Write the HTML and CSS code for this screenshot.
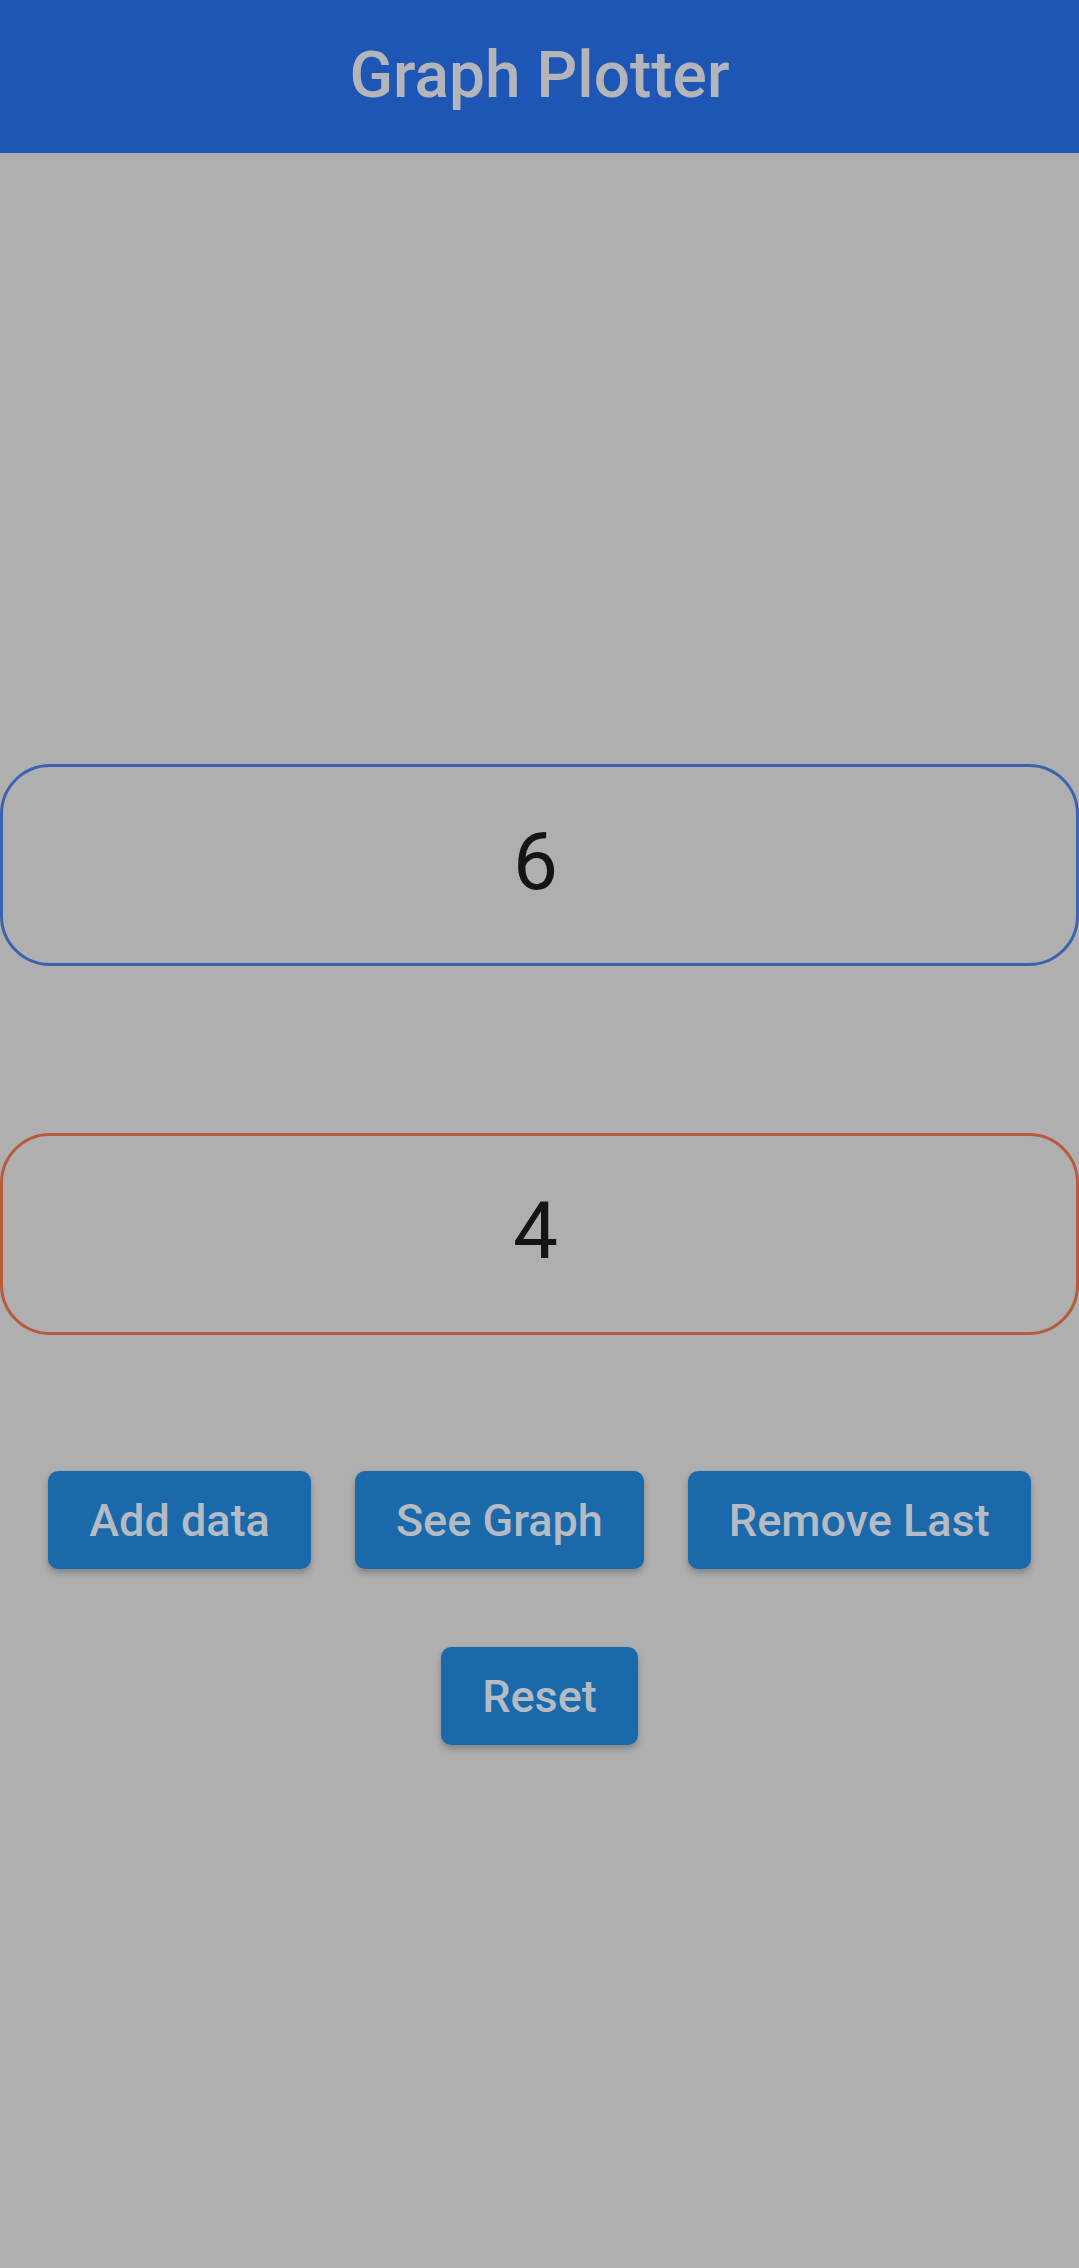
FILE: index.html
```html
<!DOCTYPE html>
<html>
<head>
<meta charset="utf-8">
<link rel="stylesheet" href="styles.css">
</head>
<body>
<header class="appbar"><h1 class="title">Graph Plotter</h1></header>
<main class="content">
  <div class="field field-x"><span class="value">6</span></div>
  <div class="field field-y"><span class="value">4</span></div>
  <div class="btn-row">
    <button class="btn btn-add">Add data</button>
    <button class="btn btn-see">See Graph</button>
    <button class="btn btn-remove">Remove Last</button>
  </div>
  <div class="btn-row btn-row-2">
    <button class="btn btn-reset">Reset</button>
  </div>
</main>
</body>
</html>
```
FILE: styles.css
```css
html, body {
  margin: 0;
  padding: 0;
}
body {
  width: 1079px;
  height: 2268px;
  background: #afafaf;
  font-family: Roboto, "Noto Sans", sans-serif;
  overflow: hidden;
}
.appbar {
  height: 153px;
  background: #1d56b4;
  display: flex;
  align-items: center;
  justify-content: center;
}
.title {
  margin: 0;
  font-size: 64px;
  font-weight: 500;
  color: #b3b5ba;
  line-height: 1;
  padding-bottom: 2px;
}
.content {
  padding-top: 611px;
  display: flex;
  flex-direction: column;
}
.field {
  box-sizing: border-box;
  height: 202px;
  border: 3px solid #3a64b2;
  border-radius: 50px;
  display: flex;
  align-items: center;
  justify-content: center;
  padding-right: 8px;
}
.field-y {
  margin-top: 167px;
  border-color: #b85a3c;
}
.value {
  font-size: 80px;
  font-weight: 400;
  color: #141414;
  line-height: 1;
  margin-bottom: 6px;
}
.btn-row {
  margin-top: 136px;
  display: flex;
  justify-content: center;
  gap: 44px;
}
.btn-row-2 {
  margin-top: 78px;
}
.btn {
  height: 98px;
  padding: 0 41px;
  border: none;
  border-radius: 10px;
  background: #1a69ab;
  color: #b6bac2;
  font-family: Roboto, "Noto Sans", sans-serif;
  font-size: 45px;
  font-weight: 500;
  box-shadow: 0 4px 6px rgba(0,0,0,0.25);
}
```
